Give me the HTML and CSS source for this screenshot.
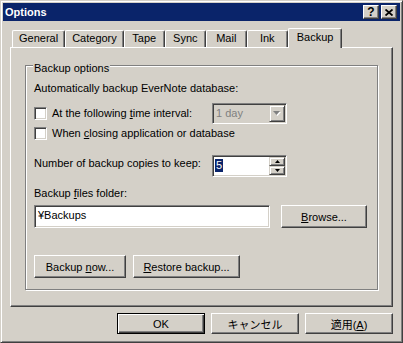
FILE: index.html
```html
<!DOCTYPE html>
<html lang="ja">
  <head>
    <meta charset="UTF-8" />
    <title>Options</title>
    <link rel="stylesheet" href="styles.css">
  </head>

  <body>
    <div class="window">
      <div class="titlebar">
        <span class="title">Options</span>
        <div class="caption-buttons">
          <span class="cap-btn">?</span>
          <span class="cap-btn">
            <svg width="8" height="7" viewBox="0 0 8 7">
              <path d="M0.5 0.5L7.5 6.5M7.5 0.5L0.5 6.5" stroke="#000" stroke-width="1.8" />
            </svg>
          </span>
        </div>
      </div>

      <div class="dialog-body">
        <div class="tabs">
          <div class="tab">General</div>
          <div class="tab">Category</div>
          <div class="tab">Tape</div>
          <div class="tab">Sync</div>
          <div class="tab">Mail</div>
          <div class="tab">Ink</div>
          <div class="tab active">Backup</div>
        </div>

        <div class="tab-panel">
          <div class="group">
            <span class="group-title">Backup options</span>

            <div class="line intro">Automatically backup EverNote database:</div>

            <div class="field-row row-interval">
              <label class="check">
                <span class="checkbox"></span>
                <span>At the following <u>t</u>ime interval:</span>
              </label>
              <div class="combo">
                <span class="combo-text">1 day</span>
                <span class="combo-btn">
                  <svg width="8" height="5" viewBox="0 0 8 5">
                    <path d="M1 1h7l-3.5 4z" fill="#fff" />
                    <path d="M0 0h7l-3.5 4z" fill="#808080" />
                  </svg>
                </span>
              </div>
            </div>

            <label class="check row-closing">
              <span class="checkbox"></span>
              <span>When <u>c</u>losing application or database</span>
            </label>

            <div class="field-row row-copies">
              <span class="field-label">Number of backup copies to keep:</span>
              <div class="spin">
                <span class="spin-value"><span class="selected">5</span></span>
                <span class="spin-btns">
                  <span class="spin-btn">
                    <svg width="5" height="3" viewBox="0 0 5 3"><path d="M2.5 0L5 3H0z" fill="#000" /></svg>
                  </span>
                  <span class="spin-btn">
                    <svg width="5" height="3" viewBox="0 0 5 3"><path d="M0 0h5L2.5 3z" fill="#000" /></svg>
                  </span>
                </span>
              </div>
            </div>

            <div class="line row-folder">Backup <u>f</u>iles folder:</div>

            <div class="folder-row">
              <div class="edit">¥Backups</div>
              <button type="button" class="btn btn-browse"><u>B</u>rowse...</button>
            </div>

            <div class="action-row">
              <button type="button" class="btn btn-backup">Backup <u>n</u>ow...</button>
              <button type="button" class="btn btn-restore"><u>R</u>estore backup...</button>
            </div>
          </div>
        </div>

        <div class="footer">
          <button type="button" class="btn btn-footer default">OK</button>
          <button type="button" class="btn btn-footer">キャンセル</button>
          <button type="button" class="btn btn-footer">適用(<u>A</u>)</button>
        </div>
      </div>
    </div>
  </body>
</html>
```

FILE: styles.css
```css
* {
  margin: 0;
  padding: 0;
  box-sizing: border-box;
}

body {
  font-family: "Liberation Sans", "Noto Sans CJK JP", sans-serif;
  font-size: 11px;
  line-height: 13px;
  color: #000;
  background-color: #d4d0c8;
}

.window {
  width: 403px;
  height: 343px;
  padding: 2px;
  background-color: #d4d0c8;
  border: 1px solid;
  border-color: #d4d0c8 #404040 #404040 #d4d0c8;
  box-shadow: inset 1px 1px #fff, inset -1px -1px #808080;
}

/* 标题栏 */
.titlebar {
  height: 18px;
  padding: 0 3px 0 2px;
  display: flex;
  align-items: center;
  justify-content: space-between;
  background-color: #0a246a;
  color: #fff;
  font-weight: bold;
}

.caption-buttons {
  display: flex;
  gap: 2px;
}

.cap-btn {
  width: 16px;
  height: 14px;
  display: flex;
  align-items: center;
  justify-content: center;
  background-color: #d4d0c8;
  border: 1px solid;
  border-color: #fff #404040 #404040 #fff;
  box-shadow: inset -1px -1px #808080;
  color: #000;
  font-size: 12px;
  font-weight: bold;
}

.dialog-body {
  padding: 7px 7px 0;
}

/* 标签页 */
.tabs {
  height: 19px;
  padding-left: 2px;
  display: flex;
  align-items: flex-end;
}

.tab {
  height: 17px;
  min-width: 41px;
  padding: 1px 6px 0;
  text-align: center;
  border: 1px solid;
  border-bottom: none;
  border-color: #fff #404040 #404040 #fff;
  border-radius: 2px 2px 0 0;
  box-shadow: inset -1px 0 #808080;
}

.tab.active {
  position: relative;
  z-index: 1;
  height: 20px;
  margin-bottom: -1px;
  padding: 2px 8px 0;
  background-color: #d4d0c8;
}

.tab-panel {
  height: 260px;
  padding: 17px 0 0 14px;
  border: 1px solid;
  border-color: #fff #404040 #404040 #fff;
  box-shadow: inset -1px -1px #808080;
}

/* 分组框 */
.group {
  position: relative;
  width: 353px;
  height: 225px;
  padding-left: 8px;
  border: 1px solid #808080;
  box-shadow: inset 1px 1px #fff, 1px 1px #fff;
}

.group-title {
  position: absolute;
  top: -4px;
  left: 7px;
  padding: 0 1px;
  background-color: #d4d0c8;
}

.line {
  height: 13px;
  white-space: nowrap;
}

.intro {
  margin-top: 16px;
}

.field-row {
  display: grid;
  grid-template-columns: 178px 75px;
}

.row-interval {
  margin-top: 8px;
  height: 21px;
  align-items: center;
}

.check {
  display: flex;
  align-items: center;
  height: 13px;
  white-space: nowrap;
}

.row-closing {
  margin-top: 3px;
}

.checkbox {
  width: 13px;
  height: 13px;
  margin-right: 5px;
  flex: none;
  background-color: #fff;
  border: 1px solid;
  border-color: #808080 #fff #fff #808080;
  box-shadow: inset 1px 1px #404040, inset -1px -1px #d4d0c8;
}

/* 下拉框（禁用） */
.combo {
  height: 21px;
  padding: 1px;
  display: flex;
  background-color: #d4d0c8;
  border: 1px solid;
  border-color: #808080 #fff #fff #808080;
  box-shadow: inset 1px 1px #404040, inset -1px -1px #d4d0c8;
}

.combo-text {
  flex: 1;
  padding-left: 2px;
  line-height: 17px;
  color: #808080;
}

.combo-btn {
  width: 16px;
  display: flex;
  align-items: center;
  justify-content: center;
  border: 1px solid;
  border-color: #d4d0c8 #404040 #404040 #d4d0c8;
  box-shadow: inset 1px 1px #fff, inset -1px -1px #808080;
}

.row-copies {
  margin-top: 15px;
  height: 22px;
}

.field-label {
  padding-top: 2px;
  white-space: nowrap;
}

/* 数字输入框 */
.spin {
  height: 22px;
  padding: 1px;
  display: flex;
  background-color: #fff;
  border: 1px solid;
  border-color: #808080 #fff #fff #808080;
  box-shadow: inset 1px 1px #404040, inset -1px -1px #d4d0c8;
}

.spin-value {
  flex: 1;
  padding: 2px 0 0 1px;
}

.spin-value .selected {
  display: inline-block;
  padding: 0 1px;
  background-color: #0a246a;
  color: #fff;
}

.spin-btns {
  width: 16px;
  display: flex;
  flex-direction: column;
}

.spin-btn {
  flex: 1;
  display: flex;
  align-items: center;
  justify-content: center;
  background-color: #d4d0c8;
  border: 1px solid;
  border-color: #d4d0c8 #404040 #404040 #d4d0c8;
  box-shadow: inset 1px 1px #fff, inset -1px -1px #808080;
}

.row-folder {
  margin-top: 10px;
}

.folder-row {
  margin-top: 5px;
  display: flex;
  gap: 11px;
}

.edit {
  width: 236px;
  height: 23px;
  padding: 0 0 0 3px;
  line-height: 19px;
  background-color: #fff;
  border: 1px solid;
  border-color: #808080 #fff #fff #808080;
  box-shadow: inset 1px 1px #404040, inset -1px -1px #d4d0c8;
}

.action-row {
  margin-top: 27px;
  display: flex;
  gap: 7px;
}

/* 按钮 */
.btn {
  font-family: inherit;
  font-size: 11px;
  color: #000;
  background-color: #d4d0c8;
  border: 1px solid;
  border-color: #fff #404040 #404040 #fff;
  box-shadow: inset -1px -1px #808080;
  height: 23px;
}

.btn-browse {
  width: 86px;
}

.btn-backup {
  width: 92px;
}

.btn-restore {
  width: 107px;
}

.footer {
  margin-top: 6px;
  display: flex;
  justify-content: flex-end;
  gap: 6px;
}

.btn-footer {
  width: 88px;
  height: 21px;
}

.btn.default {
  border-color: #000;
  box-shadow: inset 1px 1px #fff, inset -1px -1px #404040, inset -2px -2px #808080;
}
```
